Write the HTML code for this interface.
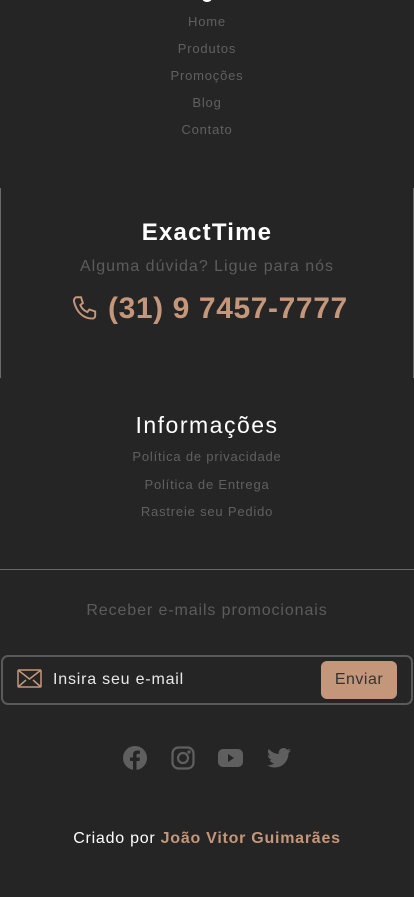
<!DOCTYPE html>
<html><head><meta charset="utf-8"><style>
*{margin:0;padding:0;box-sizing:border-box}
body{width:414px;height:897px;background:#252525;font-family:"Liberation Sans",sans-serif;overflow:hidden;position:relative}
.t{position:absolute;left:0;width:414px;text-align:center;white-space:nowrap}
.link{color:#606060;font-size:13px;letter-spacing:.8px}
</style></head><body>
<div style="position:absolute;left:202px;top:-6px;width:10px;height:8px;border:2px solid #fff;border-radius:50%;border-top:none"></div>
<div class="t link" style="top:14px">Home</div>
<div class="t link" style="top:41px">Produtos</div>
<div class="t link" style="top:68px">Promoções</div>
<div class="t link" style="top:95px">Blog</div>
<div class="t link" style="top:122px">Contato</div>

<div style="position:absolute;left:0;top:188px;width:1px;height:190px;background:#6a6a6a"></div>
<div style="position:absolute;left:413px;top:188px;width:1px;height:190px;background:#6a6a6a"></div>

<div class="t" style="top:219px;color:#fff;font-weight:bold;font-size:24px;letter-spacing:1.2px">ExactTime</div>
<div class="t" style="top:258px;color:#5c5c5c;font-size:16px;letter-spacing:1px">Alguma dúvida? Ligue para nós</div>
<div style="position:absolute;left:108px;top:292px;color:#c4967a;font-weight:bold;font-size:30px;letter-spacing:.6px;white-space:nowrap">(31) 9 7457-7777</div>
<svg style="position:absolute;left:70px;top:294px" width="31" height="31" viewBox="0 0 24 24" fill="none" stroke="#c4967a" stroke-width="1.5"><path d="M5 2.5l3.5 0 1.5 4.5-2 1.5c1 2.5 3 4.5 5.5 5.5l1.5-2 4.5 1.5v3.5c0 1-1 2-2 2C10 19 5 14 3 5.5c0-1.5 1-3 2-3z"/></svg>

<div class="t" style="top:412px;color:#fff;font-size:23px;letter-spacing:1.5px">Informações</div>
<div class="t link" style="top:449px">Política de privacidade</div>
<div class="t link" style="top:477px">Política de Entrega</div>
<div class="t link" style="top:504px">Rastreie seu Pedido</div>

<div style="position:absolute;left:0;top:569px;width:414px;height:1px;background:#6a6a6a"></div>
<div class="t" style="top:602px;color:#5c5c5c;font-size:16px;letter-spacing:.9px">Receber e-mails promocionais</div>

<div style="position:absolute;left:1px;top:655px;width:412px;height:50px;border:2px solid #5a5a5a;border-radius:7px"></div>
<svg style="position:absolute;left:17px;top:669px" width="25" height="19" viewBox="0 0 25 19" fill="none" stroke="#c4967a" stroke-width="1.5"><rect x="1" y="1" width="23" height="17" rx="1"/><path d="M1 1l11.5 9L24 1M1 18l8-7M24 18l-8-7"/></svg>
<div style="position:absolute;left:53px;top:671px;color:#e8e8e8;font-size:16px;letter-spacing:.8px">Insira seu e-mail</div>
<div style="position:absolute;left:321px;top:661px;width:76px;height:38px;background:#c4967a;border-radius:6px;color:#333;font-size:16px;text-align:center;line-height:38px;letter-spacing:.5px">Enviar</div>

<svg style="position:absolute;left:123px;top:746px" width="24" height="24" viewBox="0 0 24 24"><circle cx="12" cy="12" r="12" fill="#5f5f5f"/><path d="M13.5 24V15h3l.5-3.5h-3.5V9.5c0-1 .4-1.7 1.8-1.7H17V4.7c-.4 0-1.5-.2-2.7-.2-2.7 0-4.3 1.6-4.3 4.5v2.5H7V15h3v9z" fill="#252525"/></svg>
<svg style="position:absolute;left:171px;top:746px" width="24" height="24" viewBox="0 0 24 24" fill="none" stroke="#5f5f5f" stroke-width="2.2"><rect x="1.5" y="1.5" width="21" height="21" rx="6"/><circle cx="12" cy="12" r="5"/><circle cx="18" cy="6" r=".6" fill="#5f5f5f"/></svg>
<svg style="position:absolute;left:218px;top:748px" width="25" height="20" viewBox="0 0 25 20"><rect x="0" y="1" width="25" height="18" rx="5" fill="#5f5f5f"/><path d="M10 6v8l6-4z" fill="#252525"/></svg>
<svg style="position:absolute;left:267px;top:748px" width="24" height="20" viewBox="0 0 24 20"><path fill="#5f5f5f" d="M24 2.4c-.9.4-1.8.6-2.8.8 1-.6 1.8-1.6 2.2-2.7-1 .6-2 1-3.1 1.2C19.4.7 18.1 0 16.6 0c-2.7 0-4.9 2.2-4.9 4.9 0 .4 0 .8.1 1.1C7.7 5.8 4.1 3.9 1.7.9c-.4.7-.7 1.6-.7 2.5 0 1.7.9 3.2 2.2 4.1-.8 0-1.6-.2-2.200-.6v.1c0 2.4 1.7 4.4 3.9 4.8-.4.1-.8.2-1.3.2-.3 0-.6 0-.9-.1.6 2 2.400 3.4 4.6 3.4-1.7 1.3-3.8 2.1-6.1 2.1-.4 0-.8 0-1.2-.1 2.2 1.4 4.8 2.2 7.5 2.2 9.1 0 14-7.5 14-14v-.6c1-.7 1.8-1.6 2.5-2.500z"/></svg>

<div class="t" style="top:830px;color:#fff;font-size:16px;letter-spacing:.75px">Criado por <b style="color:#c4967a">João Vitor Guimarães</b></div>
</body></html>
